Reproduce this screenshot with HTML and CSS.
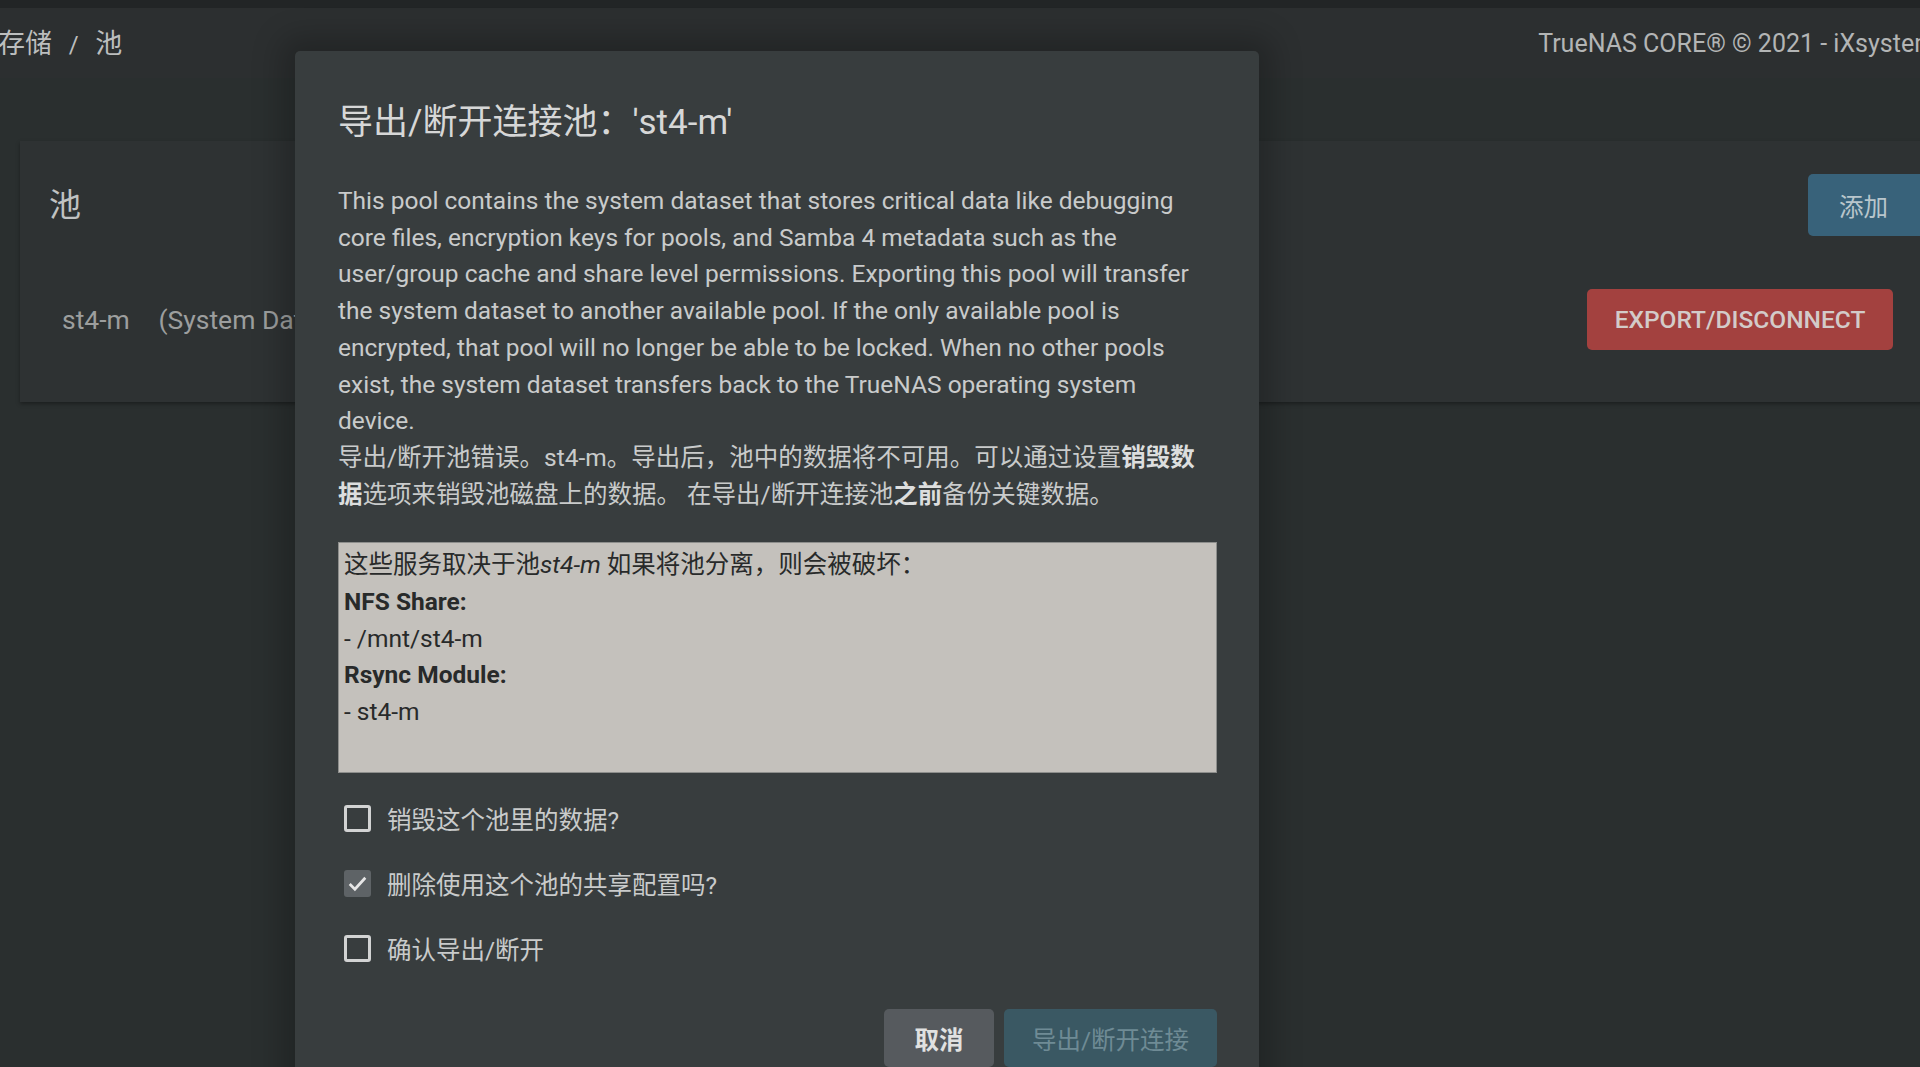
FILE: index.html
```html
<!DOCTYPE html>
<html lang="zh-CN">

<head>
    <meta charset="UTF-8">
    <meta name="viewport" content="width=device-width, initial-scale=1.0">
    <title>池 - TrueNAS</title>
    <link rel="stylesheet" href="styles.css">
</head>

<body>
    <div class="topline"></div>
    <header class="header">
        <div class="crumbs">存储 <span class="sep">/</span> 池</div>
        <div class="copyright">TrueNAS CORE® © 2021 - iXsystems</div>
    </header>

    <main class="content">
        <section class="card">
            <div class="card-head">
                <h2 class="card-title">池</h2>
                <button class="btn btn-add">添加</button>
            </div>
            <div class="card-row">
                <div class="pool-name">st4-m <span class="pool-note">(System Dataset Pool)</span></div>
                <button class="btn btn-danger">EXPORT/DISCONNECT</button>
            </div>
        </section>
    </main>

    <!-- 对话框 -->
    <div class="dialog">
        <h1 class="dialog-title">导出/断开连接池：'st4-m'</h1>
        <p class="dialog-text">This pool contains the system dataset that stores critical data like debugging core files, encryption keys for pools, and Samba 4 metadata such as the user/group cache and share level permissions. Exporting this pool will transfer the system dataset to another available pool. If the only available pool is encrypted, that pool will no longer be able to be locked. When no other pools exist, the system dataset transfers back to the TrueNAS operating system device.</p>
        <p class="dialog-text">导出/断开池错误。st4-m。导出后，池中的数据将不可用。可以通过设置<b>销毁数据</b>选项来销毁池磁盘上的数据。 在导出/断开连接池<b>之前</b>备份关键数据。</p>

        <div class="services">
            <div>这些服务取决于池<i>st4-m</i> 如果将池分离，则会被破坏：</div>
            <div><b>NFS Share:</b></div>
            <div>- /mnt/st4-m</div>
            <div><b>Rsync Module:</b></div>
            <div>- st4-m</div>
        </div>

        <ul class="checks">
            <li class="check">
                <span class="box"></span>
                <span class="label">销毁这个池里的数据?</span>
            </li>
            <li class="check">
                <span class="box checked">
                    <svg viewBox="0 0 24 24" width="25" height="25"><path d="M4.5 12.5l5 5L19.5 6.5" fill="none" stroke="#e6e6e6" stroke-width="2.6"/></svg>
                </span>
                <span class="label">删除使用这个池的共享配置吗?</span>
            </li>
            <li class="check">
                <span class="box"></span>
                <span class="label">确认导出/断开</span>
            </li>
        </ul>

        <div class="actions">
            <button class="btn btn-cancel">取消</button>
            <button class="btn btn-export" disabled>导出/断开连接</button>
        </div>
    </div>
</body>

</html>
```

FILE: styles.css
```css
html,
body {
    padding: 0;
    margin: 0;
}

body {
    width: 1920px;
    height: 1067px;
    overflow: hidden;
    position: relative;
    background: #2a2f2f;
    font-family: Roboto, "Noto Sans CJK SC", sans-serif;
    color: #c9cbcb;
}

ul {
    margin: 0;
    padding: 0;
}

li {
    list-style: none;
}

.topline {
    height: 8px;
    background: #222526;
}

.header {
    height: 70px;
    display: flex;
    align-items: center;
    justify-content: space-between;
    background: #2c2f30;
    white-space: nowrap;
}

.crumbs {
    margin: -4px 0 0 -2px;
    font-size: 27px;
    color: #bcbebe;
}

.crumbs .sep {
    margin: 0 10px;
    font-size: 24px;
}

.copyright {
    margin-right: -29px;
    font-size: 25px;
    color: #b3b5b5;
}

.content {
    padding: 63px 0 0 20px;
}

.card {
    margin-right: -60px;
    padding: 33px 42px 52px 29px;
    background: #2e3233;
    box-shadow: 0 2px 4px rgba(0, 0, 0, 0.35);
}

.card-head {
    height: 62px;
    display: flex;
    align-items: center;
    justify-content: space-between;
}

.card-title {
    margin: -6px 0 0;
    font-size: 32px;
    font-weight: 400;
    color: #c0c2c2;
}

.card-row {
    margin-top: 53px;
    padding: 0 45px 0 13px;
    display: flex;
    align-items: center;
    justify-content: space-between;
}

.pool-name {
    font-size: 26.5px;
    color: #9c9e9e;
}

.pool-note {
    margin-left: 22px;
}

.btn {
    border: none;
    border-radius: 5px;
    font-family: Roboto, "Noto Sans CJK SC", sans-serif;
    cursor: pointer;
}

.btn-add {
    width: 130px;
    height: 62px;
    text-align: left;
    padding: 0 0 0 31px;
    background: #38627a;
    color: #b9c6cc;
    font-size: 24.5px;
}

.btn-danger {
    width: 306px;
    height: 61px;
    background: #a3413f;
    color: #d3cbc9;
    font-size: 24.5px;
    font-weight: 500;
}

/* 对话框 */
.dialog {
    position: absolute;
    left: 295px;
    top: 51px;
    width: 964px;
    height: 1080px;
    box-sizing: border-box;
    padding: 53px 42px 0 43px;
    background: #383d3e;
    border-radius: 5px;
    box-shadow: 0 0 30px 14px rgba(0, 0, 0, 0.22);
}

.dialog-title {
    margin: 0 0 41px;
    font-size: 35px;
    line-height: 38px;
    font-weight: 400;
    color: #d6d7d7;
}

.dialog-text {
    margin: 0;
    font-size: 24.5px;
    line-height: 36.7px;
    color: #c9cbcb;
}

.dialog-text b {
    font-weight: 700;
    color: #dcdede;
}

.services {
    margin-top: 29px;
    height: 231px;
    box-sizing: border-box;
    padding: 4px 5px;
    background: #c4c1bc;
    border: 1px solid #8d8e8c;
    color: #282a2a;
    font-size: 24.5px;
    line-height: 36.7px;
}

.services b {
    font-weight: 700;
}

.checks {
    margin-top: 13px;
    padding-left: 6px;
}

.check {
    height: 65px;
    display: flex;
    align-items: center;
}

.box {
    width: 27px;
    height: 27px;
    box-sizing: border-box;
    border: 3px solid #d2d3d3;
    border-radius: 3px;
    display: flex;
    align-items: center;
    justify-content: center;
}

.box.checked {
    border: none;
    background: #5e6366;
}

.label {
    margin-left: 16px;
    font-size: 24.5px;
    color: #c9cbcb;
}

.actions {
    margin-top: 28px;
    display: flex;
    justify-content: flex-end;
    gap: 10px;
}

.btn-cancel {
    width: 110px;
    height: 58px;
    background: #565a5e;
    color: #e0e1e1;
    font-size: 24.5px;
    font-weight: 700;
}

.btn-export {
    width: 213px;
    height: 58px;
    background: #3a5863;
    color: #6f8b95;
    font-size: 24.5px;
    cursor: default;
}
```
